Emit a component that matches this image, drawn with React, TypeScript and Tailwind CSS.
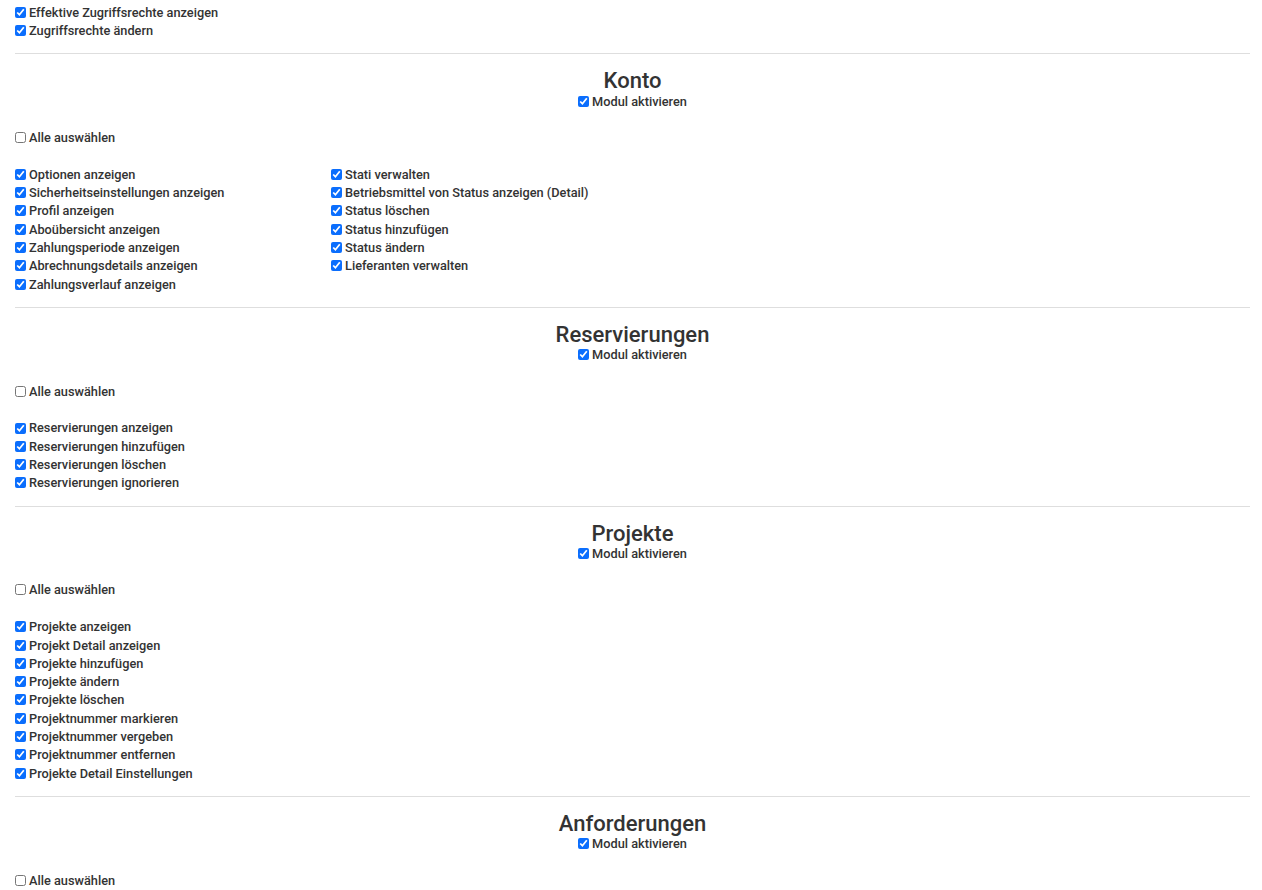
import React from "react";

type Section = {
  title: string;
  cols: string[][];
};

const sections: Section[] = [
  {
    title: "Konto",
    cols: [
      [
        "Optionen anzeigen",
        "Sicherheitseinstellungen anzeigen",
        "Profil anzeigen",
        "Aboübersicht anzeigen",
        "Zahlungsperiode anzeigen",
        "Abrechnungsdetails anzeigen",
        "Zahlungsverlauf anzeigen",
      ],
      [
        "Stati verwalten",
        "Betriebsmittel von Status anzeigen (Detail)",
        "Status löschen",
        "Status hinzufügen",
        "Status ändern",
        "Lieferanten verwalten",
      ],
    ],
  },
  {
    title: "Reservierungen",
    cols: [
      [
        "Reservierungen anzeigen",
        "Reservierungen hinzufügen",
        "Reservierungen löschen",
        "Reservierungen ignorieren",
      ],
    ],
  },
  {
    title: "Projekte",
    cols: [
      [
        "Projekte anzeigen",
        "Projekt Detail anzeigen",
        "Projekte hinzufügen",
        "Projekte ändern",
        "Projekte löschen",
        "Projektnummer markieren",
        "Projektnummer vergeben",
        "Projektnummer entfernen",
        "Projekte Detail Einstellungen",
      ],
    ],
  },
  { title: "Anforderungen", cols: [] },
];

function Check({ label, checked = true }: { label: string; checked?: boolean }) {
  return (
    <label className="flex items-center h-[18.3px] whitespace-nowrap">
      <input
        type="checkbox"
        defaultChecked={checked}
        className="m-0 w-[11px] h-[11px] accent-[#0b6efd] shrink-0"
      />
      <span className="ml-[3px]">{label}</span>
    </label>
  );
}

export default function App() {
  return (
    <div
      className="w-[1262px] h-[890px] overflow-hidden bg-white px-[15px] pt-[3px] text-[12.75px] font-medium text-[#333]"
      style={{ fontFamily: "Roboto, 'Liberation Sans', sans-serif" }}
    >
      <Check label="Effektive Zugriffsrechte anzeigen" />
      <Check label="Zugriffsrechte ändern" />

      {sections.map((s) => (
        <div key={s.title} className="w-[1235px]">
          <hr className="mt-[13.5px] border-0 border-t border-[#dedede]" />
          <h3 className="mt-[15px] text-center text-[22px] leading-[23px] font-medium text-[#333]">
            {s.title}
          </h3>
          <div className="flex justify-center">
            <Check label="Modul aktivieren" />
          </div>
          <div className="mt-[18px]">
            <Check label="Alle auswählen" checked={false} />
          </div>
          {s.cols.length > 0 && (
            <div className="mt-[18.5px] flex">
              {s.cols.map((col, i) => (
                <div key={i} className="w-[316px]">
                  {col.map((l) => (
                    <Check key={l} label={l} />
                  ))}
                </div>
              ))}
            </div>
          )}
        </div>
      ))}
    </div>
  );
}
